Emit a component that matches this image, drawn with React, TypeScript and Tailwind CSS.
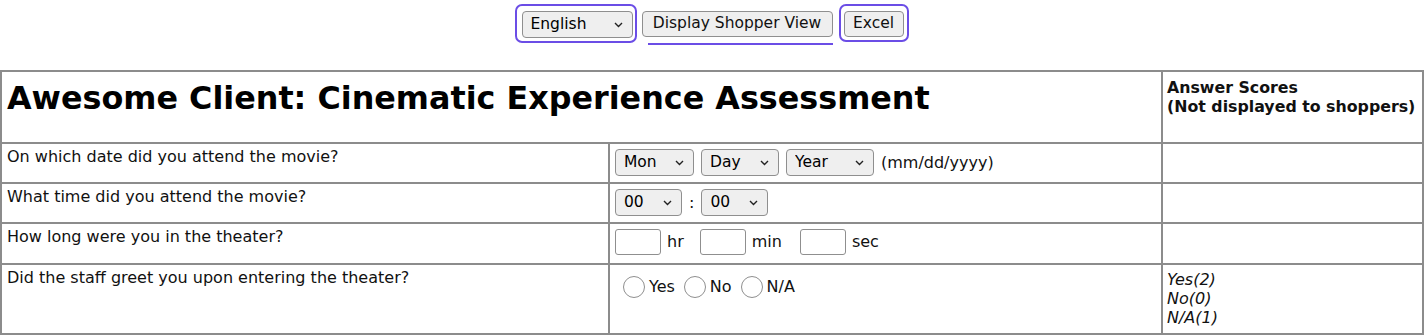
import React from 'react';

const font = { fontFamily: '"DejaVu Sans", Verdana, sans-serif' };

// Chrome-like select with a small chevron
const Select = ({ label, width }: { label: string; width: string }) => (
  <span className={`relative inline-flex items-center ${width}`}>
    <select
      className="h-[27px] w-full appearance-none rounded-[4px] border border-[#8f8f8f] bg-[#efefef] pl-[8px] pr-6 text-[15.5px] text-black"
      defaultValue={label}
    >
      <option>{label}</option>
    </select>
    <svg className="pointer-events-none absolute right-[10px] top-[11px]" width="9" height="6" viewBox="0 0 9 6">
      <path d="M1 1l3.5 3.5L8 1" fill="none" stroke="#222" strokeWidth="1.4" />
    </svg>
  </span>
);

const Box = ({ unit }: { unit: string }) => (
  <span className="inline-flex items-center gap-[6px]">
    <input className="h-[26px] w-[46px] rounded-[3px] border border-[#8f8f8f] bg-white" />
    <span>{unit}</span>
  </span>
);

const Radio = ({ label }: { label: string }) => (
  <label className="inline-flex items-center gap-[4px]">
    <input type="radio" name="greet" className="h-[22px] w-[22px] appearance-none rounded-full border border-[#8f8f8f] bg-white" />
    <span>{label}</span>
  </label>
);

const cell = 'border-2 border-[#8c8c8c] align-top';

export default function App() {
  return (
    <div className="h-[335px] w-[1426px] overflow-hidden bg-white text-[16px] text-[#111]" style={font}>
      <div className="flex h-[70px] justify-center pt-[4px]">
        <div className="ml-[-3px] flex items-start">
          <div className="rounded-[7px] border-2 border-[#6b4de6] pb-[3px] pl-[5px] pr-[2px] pt-[5px]">
            <Select label="English" width="w-[111px]" />
          </div>
          <div className="ml-[5px] flex flex-col items-end pt-[7px]">
            <button className="h-[26px] w-[191px] rounded-[4px] border border-[#8f8f8f] bg-[#efefef] text-[15.5px]">
              Display Shopper View
            </button>
            <div className="mt-[6px] h-[2px] w-[185px] bg-[#6b4de6]" />
          </div>
          <div className="ml-[6px] rounded-[7px] border-2 border-[#6b4de6] px-[3px] pb-[3px] pt-[5px]">
            <button className="h-[26px] w-[60px] rounded-[4px] border border-[#8f8f8f] bg-[#efefef] text-[15.5px]">
              Excel
            </button>
          </div>
        </div>
      </div>

      <table className="w-[1424px] table-fixed border-collapse">
        <colgroup>
          <col className="w-[608px]" />
          <col className="w-[553px]" />
          <col />
        </colgroup>
        <tbody>
          <tr className="h-[72px]">
            <td colSpan={2} className={`${cell} px-[5px] pt-[6px] text-[31.8px] font-bold leading-[40px] text-black`}>
              Awesome Client: Cinematic Experience Assessment
            </td>
            <td className={`${cell} whitespace-nowrap px-[4px] pt-[6px] text-[15.8px] font-bold leading-[19px]`}>
              Answer Scores
              <br />
              (Not displayed to shoppers)
            </td>
          </tr>
          <tr className="h-[40px]">
            <td className={`${cell} px-[5px] pt-[3px] leading-[20px]`}>On which date did you attend the movie?</td>
            <td className={`${cell} px-[5px] pt-[5px]`}>
              <div className="flex items-center gap-[7px]">
                <Select label="Mon" width="w-[79px]" />
                <Select label="Day" width="w-[78px]" />
                <Select label="Year" width="w-[88px]" />
                <span>(mm/dd/yyyy)</span>
              </div>
            </td>
            <td className={cell} />
          </tr>
          <tr className="h-[40px]">
            <td className={`${cell} px-[5px] pt-[3px] leading-[20px]`}>What time did you attend the movie?</td>
            <td className={`${cell} px-[5px] pt-[5px]`}>
              <div className="flex items-center gap-[7px]">
                <Select label="00" width="w-[67px]" />
                <span>:</span>
                <Select label="00" width="w-[67px]" />
              </div>
            </td>
            <td className={cell} />
          </tr>
          <tr className="h-[41px]">
            <td className={`${cell} px-[5px] pt-[3px] leading-[20px]`}>How long were you in the theater?</td>
            <td className={`${cell} px-[5px] pt-[5px]`}>
              <div className="flex items-center gap-[16px]">
                <Box unit="hr" />
                <Box unit="min" />
                <span className="ml-[2px]">
                  <Box unit="sec" />
                </span>
              </div>
            </td>
            <td className={cell} />
          </tr>
          <tr className="h-[70px]">
            <td className={`${cell} px-[5px] pt-[3px] leading-[20px]`}>Did the staff greet you upon entering the theater?</td>
            <td className={`${cell} px-[13px] pt-[10px]`}>
              <div className="flex items-center gap-[9px]">
                <Radio label="Yes" />
                <Radio label="No" />
                <Radio label="N/A" />
              </div>
            </td>
            <td className={`${cell} px-[4px] pt-[5px] italic leading-[19px]`}>
              Yes(2)
              <br />
              No(0)
              <br />
              N/A(1)
            </td>
          </tr>
        </tbody>
      </table>
    </div>
  );
}
